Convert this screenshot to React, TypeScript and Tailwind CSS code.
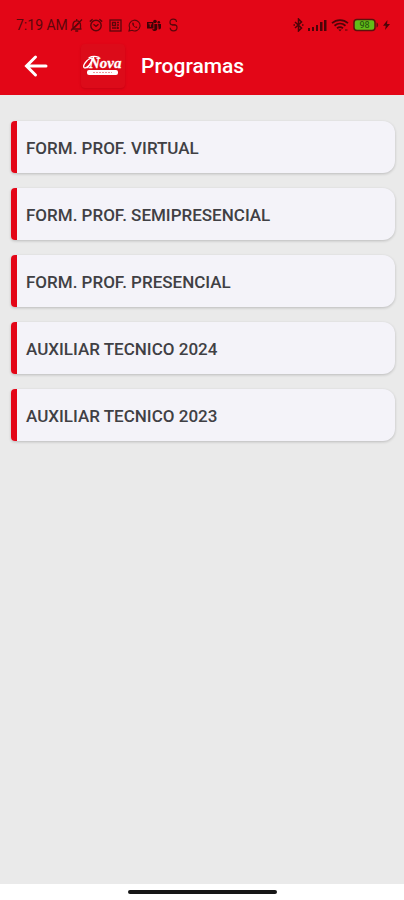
const programs = [
  "FORM. PROF. VIRTUAL",
  "FORM. PROF. SEMIPRESENCIAL",
  "FORM. PROF. PRESENCIAL",
  "AUXILIAR TECNICO 2024",
  "AUXILIAR TECNICO 2023",
];

const StatusIcons = () => (
  <div className="flex items-center gap-x-1.5" aria-hidden="true">
    {/* muted bell */}
    <svg width="13" height="14" viewBox="0 0 13 14" fill="none" stroke="currentColor" strokeWidth="1.3">
      <path d="M1.500 11h10M3 11V7c0-2.500 1.300-4.200 3.700-4.200S10.500 4.500 10.500 7v4M6.700 3V1M5.200 13h3M1 12.500L12 1.500" />
      <path d="M4.500 9.500L9 5" />
    </svg>
    {/* alarm */}
    <svg width="14" height="14" viewBox="0 0 14 14" fill="none" stroke="currentColor" strokeWidth="1.4">
      <circle cx="7" cy="7.5" r="5.2" />
      <path d="M4.500 6.300L7 8.300l2.500-2M.8 3.600L3.600 1.200M13.200 3.600l-2.800-2.400" />
    </svg>
    {/* news */}
    <svg width="13" height="13" viewBox="0 0 13 13" fill="none" stroke="currentColor" strokeWidth="1.3">
      <rect x="1" y="1" width="11" height="11" />
      <path d="M3.500 3.500h3v3h-3zM8 3.500h2M8 6h2M3 9h4M8.500 7.500V10M7.500 9H10" />
    </svg>
    {/* whatsapp */}
    <svg width="13" height="13" viewBox="0 0 13 13" fill="none" stroke="currentColor" strokeWidth="1.1">
      <path d="M1 12l.8-3A5.400 5.400 0 1 1 4 11.300z" />
      <path d="M4.600 3.500c-1 1.200 0 3 1.200 4.100s2.800 1.900 3.700.9L8.200 7.200l-.8.700c-.8-.4-1.400-1-1.800-1.800l.6-.8L5.300 3.500z" fill="currentColor" stroke="none" />
    </svg>
    {/* teams */}
    <svg width="14" height="13" viewBox="0 0 14 13" fill="currentColor" className="text-[#3d0306]">
      <circle cx="8" cy="2.500" r="1.800" />
      <circle cx="11.800" cy="3.200" r="1.300" />
      <path d="M0 3h6.500v6.500H0zM7.300 5h3v4.500c0 1.500-1 2.500-2.500 2.500S5.500 11.300 5 10.200h2.300zM11 5h3v3.500c0 1.300-1 2-2.300 2z" />
      <path d="M1.500 4.800H5M3.250 4.800v3.200" stroke="#e30617" strokeWidth="1" />
    </svg>
    {/* linked rings */}
    <svg width="13" height="14" viewBox="0 0 13 14" fill="none" stroke="currentColor" strokeWidth="1.200">
      <path d="M8.500 6.800H5.500C3.800 6.800 3 5.500 3 4.200 3 2.400 4.200 1.200 6.200 1.200S9.500 2.400 9.500 4" />
      <path d="M5 6.800h2.500c1.700 0 2.500 1.300 2.500 2.700 0 2-1.300 3.300-3.500 3.300S3.200 11.500 3.200 9.800" />
    </svg>
  </div>
);

const SystemIcons = () => (
  <div className="flex items-center gap-x-1 text-[#4d0408]" aria-hidden="true">
    {/* bluetooth */}
    <svg width="11" height="14" viewBox="0 0 11 14" fill="none" stroke="currentColor" strokeWidth="1.500">
      <path d="M2 4l6.500 6L5.500 13V1l3 3L2 10" />
      <path d="M.5 7h1.500M9 7h1.500" />
    </svg>
    {/* signal */}
    <svg width="19" height="14" viewBox="0 0 19 14" fill="currentColor">
      <path d="M0 10h2v3H0zM4 9h2v4H4zM8 7h2v6H8zM12 4h2.500v9H12zM16 2h2.500v11H16z" />
    </svg>
    {/* wifi */}
    <svg width="18" height="14" viewBox="0 0 18 14" fill="none" stroke="currentColor" strokeWidth="1.800">
      <path d="M1 5.200c4.600-4.200 11.400-4.200 16 0M3.500 7.800c3.300-2.900 7.700-2.900 11 0M6 10.300c1.900-1.500 4.100-1.500 6 0" />
      <path d="M7.300 11.500L9 13.300l1.700-1.800z" fill="currentColor" stroke="none" />
      <path d="M14 12h2.500" strokeWidth="1" />
    </svg>
    {/* battery */}
    <svg width="26" height="14" viewBox="0 0 26 14">
      <rect x="1" y="1.500" width="21" height="11" rx="3" fill="#62bd18" stroke="#5c120c" strokeWidth="1.500" />
      <path d="M23.500 4.500c2.200.6 2.200 4.400 0 5z" fill="#5c120c" />
      <text x="11.500" y="10" textAnchor="middle" fontSize="9" fontWeight="500" fill="#2c5a10" fontFamily="Roboto, sans-serif">
        98
      </text>
    </svg>
    {/* charging */}
    <svg width="7" height="10" viewBox="0 0 7 10" fill="currentColor">
      <path d="M4.500 0L0 5.800h2.800L2 10 7 4H4z" />
    </svg>
  </div>
);

const Logo = () => (
  <svg width="44" height="44" viewBox="0 0 44 44" role="img" aria-label="Nova" className="rounded-sm bg-[#dc0b19] shadow-sm">
    <g fill="none" stroke="#fff" strokeLinecap="round">
      <path d="M10 14C5.500 16 1.500 21.500 3 23.500c1.500 1.500 5-1.500 7-5" strokeWidth="1.300" />
      <path d="M6.500 23.500C9 21 11 17 12.500 13.500" strokeWidth="1.500" />
      <path d="M8 13.800c2.500-1.500 7-1.500 10-.5" strokeWidth="1.300" />
    </g>
    <text x="8" y="24" fontSize="15" fontWeight="700" fontStyle="italic" fill="#fff" stroke="#fff" strokeWidth="0.3" fontFamily="'Liberation Serif', serif">
      Nova
    </text>
    <rect x="6" y="26" width="31" height="5" rx="2" fill="#fff" />
    <path d="M12 28.500h19" stroke="#ef9a9f" strokeWidth="1" strokeDasharray="2 1" />
  </svg>
);

export default function App() {
  return (
    <div className="flex min-h-screen flex-col bg-[#eaeaea] font-[Roboto,sans-serif]">
      <header className="bg-[#e30617] pt-3.5 pb-2">
        <div className="flex h-[22px] items-center justify-between pr-3.5 pl-4 text-[#5c060b]">
          <div className="flex items-center gap-x-0.5">
            <span className="text-sm">7:19 AM</span>
            <StatusIcons />
          </div>
          <SystemIcons />
        </div>
        <div className="mt-2 flex h-[43px] items-center pl-6 text-white">
          <button type="button" aria-label="Volver" className="mr-[33px]">
            <svg width="24" height="24" viewBox="0 0 24 24" fill="none" stroke="currentColor" strokeWidth="3" strokeLinecap="round">
              <path d="M22 12H3M11.500 3L2.500 12l9 9" />
            </svg>
          </button>
          <Logo />
          <h1 className="ml-4 pt-0.5 text-[21px] font-medium">Programas</h1>
        </div>
      </header>

      <main className="flex-1 pt-[26px] pr-[9px] pb-6 pl-[11px]">
        <ul className="flex flex-col gap-y-[15px]">
          {programs.map((name) => (
            <li key={name}>
              <button
                type="button"
                className="flex h-[52px] w-full items-stretch overflow-hidden rounded-l-sm rounded-r-xl bg-[#f4f3f9] text-left shadow-[0_1px_3px_rgba(0,0,0,0.2)]"
              >
                <span className="w-1.5 bg-[#e30617]" />
                <span className="self-center pt-1 pl-[9px] text-[17px] font-medium text-[#404044]">{name}</span>
              </button>
            </li>
          ))}
        </ul>
      </main>

      <footer className="flex h-4 justify-center bg-white pt-1.5">
        <div className="h-1 w-[149px] rounded-full bg-[#161616]" />
      </footer>
    </div>
  );
}
